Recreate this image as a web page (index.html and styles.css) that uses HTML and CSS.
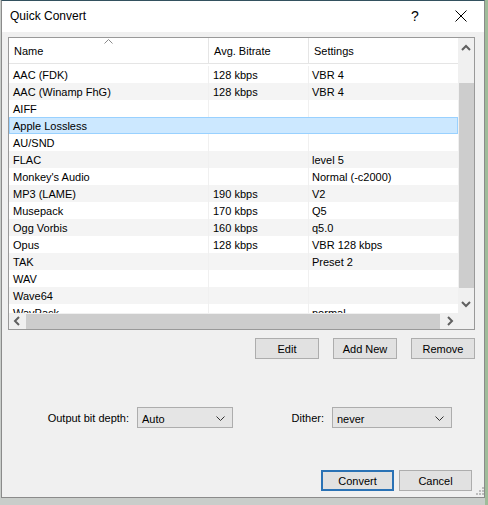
FILE: index.html
```html
<!DOCTYPE html>
<html>
<head>
<meta charset="utf-8">
<link rel="stylesheet" href="styles.css">
</head>
<body>
<div class="desktop">
  <div class="dialog">
    <div class="titlebar">
      <span class="title">Quick Convert</span>
      <span class="help">?</span>
      <svg class="close" width="12" height="12" viewBox="0 0 12 12"><path d="M0.5 0.5 L11.5 11.5 M11.5 0.5 L0.5 11.5" stroke="#000" stroke-width="1" fill="none"/></svg>
    </div>
    <div class="client">
      <div class="listview">
        <div class="lv-main">
          <div class="lv-header">
            <div class="hcell c1">Name</div>
            <div class="hcell c2">Avg. Bitrate</div>
            <div class="hcell c3">Settings</div>
            <svg class="sort-arrow" width="9" height="5" viewBox="0 0 9 5"><path d="M0.5 4.5 L4.5 0.5 L8.5 4.5" stroke="#8a8a8a" stroke-width="1" fill="none"/></svg>
          </div>
          <div class="lv-rows">
            <div class="row"><div class="cell c1">AAC (FDK)</div><div class="cell c2">128 kbps</div><div class="cell c3">VBR 4</div></div>
            <div class="row alt"><div class="cell c1">AAC (Winamp FhG)</div><div class="cell c2">128 kbps</div><div class="cell c3">VBR 4</div></div>
            <div class="row"><div class="cell c1">AIFF</div><div class="cell c2"></div><div class="cell c3"></div></div>
            <div class="row selected"><div class="cell c1">Apple Lossless</div><div class="cell c2"></div><div class="cell c3"></div></div>
            <div class="row"><div class="cell c1">AU/SND</div><div class="cell c2"></div><div class="cell c3"></div></div>
            <div class="row alt"><div class="cell c1">FLAC</div><div class="cell c2"></div><div class="cell c3">level 5</div></div>
            <div class="row"><div class="cell c1">Monkey's Audio</div><div class="cell c2"></div><div class="cell c3">Normal (-c2000)</div></div>
            <div class="row alt"><div class="cell c1">MP3 (LAME)</div><div class="cell c2">190 kbps</div><div class="cell c3">V2</div></div>
            <div class="row"><div class="cell c1">Musepack</div><div class="cell c2">170 kbps</div><div class="cell c3">Q5</div></div>
            <div class="row alt"><div class="cell c1">Ogg Vorbis</div><div class="cell c2">160 kbps</div><div class="cell c3">q5.0</div></div>
            <div class="row"><div class="cell c1">Opus</div><div class="cell c2">128 kbps</div><div class="cell c3">VBR 128 kbps</div></div>
            <div class="row alt"><div class="cell c1">TAK</div><div class="cell c2"></div><div class="cell c3">Preset 2</div></div>
            <div class="row"><div class="cell c1">WAV</div><div class="cell c2"></div><div class="cell c3"></div></div>
            <div class="row alt"><div class="cell c1">Wave64</div><div class="cell c2"></div><div class="cell c3"></div></div>
            <div class="row"><div class="cell c1">WavPack</div><div class="cell c2"></div><div class="cell c3">normal</div></div>
          </div>
        </div>
        <div class="vscroll">
          <svg class="arrow" width="16" height="17" viewBox="0 0 16 17"><path d="M4 12 L8 8 L12 12" stroke="#606060" stroke-width="2" fill="none"/></svg>
          <div class="vtrack"><div class="vthumb"></div></div>
          <svg class="arrow" width="16" height="17" viewBox="0 0 16 17"><path d="M4 6 L8 10 L12 6" stroke="#606060" stroke-width="2" fill="none"/></svg>
        </div>
        <div class="hscroll">
          <svg class="arrow" width="17" height="16" viewBox="0 0 17 16"><path d="M10 4 L6 8 L10 12" stroke="#606060" stroke-width="2" fill="none"/></svg>
          <div class="htrack"><div class="hthumb"></div></div>
          <svg class="arrow" width="17" height="16" viewBox="0 0 17 16"><path d="M7 4 L11 8 L7 12" stroke="#606060" stroke-width="2" fill="none"/></svg>
        </div>
        <div class="corner"></div>
      </div>

      <div class="actions">
        <button class="btn">Edit</button>
        <button class="btn">Add New</button>
        <button class="btn">Remove</button>
      </div>

      <div class="options">
        <span class="opt-label">Output bit depth:</span>
        <div class="combo"><span>Auto</span><svg width="9" height="5" viewBox="0 0 9 5"><path d="M0.5 0.5 L4.5 4.5 L8.5 0.5" stroke="#333" stroke-width="1" fill="none"/></svg></div>
        <span class="opt-label">Dither:</span>
        <div class="combo"><span>never</span><svg width="9" height="5" viewBox="0 0 9 5"><path d="M0.5 0.5 L4.5 4.5 L8.5 0.5" stroke="#333" stroke-width="1" fill="none"/></svg></div>
      </div>

      <div class="footer">
        <button class="btn default">Convert</button>
        <button class="btn">Cancel</button>
      </div>
    </div>
    <svg class="grip" width="9" height="9" viewBox="0 0 9 9">
      <rect x="7" y="1" width="2" height="2" fill="#bdbdbd"/>
      <rect x="4" y="4" width="2" height="2" fill="#bdbdbd"/>
      <rect x="7" y="4" width="2" height="2" fill="#bdbdbd"/>
      <rect x="1" y="7" width="2" height="2" fill="#bdbdbd"/>
      <rect x="4" y="7" width="2" height="2" fill="#bdbdbd"/>
      <rect x="7" y="7" width="2" height="2" fill="#bdbdbd"/>
    </svg>
  </div>
</div>
</body>
</html>
```

FILE: styles.css
```css
* { box-sizing: border-box; }

html, body {
  margin: 0;
  padding: 0;
}

body {
  width: 488px;
  height: 505px;
  overflow: hidden;
  background: #c9cdca;
  font-family: "Liberation Sans", Arial, sans-serif;
  font-size: 11px;
  color: #000;
}

.desktop {
  width: 488px;
  height: 505px;
  background: linear-gradient(to right, #c9cdca 0, #c9cdca 485px, #9fbc9a 485px);
  padding-left: 1px;
}

.dialog {
  position: relative;
  width: 484px;
  height: 498px;
  border: 1px solid #8b8b8b;
  border-top-color: #33515f;
  background: #f0f0f0;
  display: flex;
  flex-direction: column;
}

.titlebar {
  height: 31px;
  background: #fff;
  display: flex;
  align-items: center;
  padding-left: 8px;
  flex-shrink: 0;
}

.title {
  font-size: 12px;
  flex: 1;
  margin-top: -1px;
}

.help {
  font-size: 14px;
  width: 12px;
  margin-right: 32px;
  margin-top: -1px;
}

.close {
  margin-right: 17px;
  margin-top: -2px;
}

.client {
  flex: 1;
  padding: 5px 9px 0 6px;
}

/* list view */
.listview {
  width: 467px;
  height: 293px;
  border: 1px solid #999;
  background: #fff;
  display: grid;
  grid-template-columns: 449px 16px;
  grid-template-rows: 275px 16px;
}

.lv-main {
  overflow: hidden;
  position: relative;
}

.lv-header {
  position: relative;
  height: 26px;
  display: flex;
  border-bottom: 1px solid #e5e5e5;
}

.hcell {
  height: 100%;
  display: flex;
  align-items: center;
  padding-left: 5px;
  border-right: 1px solid #e5e5e5;
  padding-top: 1px;
}

.c1 { width: 200px; }
.c2 { width: 100px; }
.c3 { flex: 1; }
.hcell.c3 { border-right: none; }

.sort-arrow {
  position: absolute;
  left: 95px;
  top: 1px;
}

.lv-rows {
  padding-top: 2px;
}

.row {
  height: 17px;
  display: flex;
}

.row.alt { background: #f4f4f4; }

.row.selected {
  background: #cce8ff;
  box-shadow: inset 0 0 0 1px #99d1ff;
}

.cell {
  height: 100%;
  display: flex;
  align-items: center;
  padding-left: 4px;
  padding-top: 1px;
  border-right: 1px solid #f0f0f0;
  white-space: nowrap;
}

.cell.c3 { border-right: none; padding-left: 3px; }
.row.selected .cell { border-right-color: transparent; }

/* scrollbars */
.vscroll {
  background: #f0f0f0;
  display: flex;
  flex-direction: column;
}

.vscroll .arrow { display: block; flex-shrink: 0; }

.vtrack {
  flex: 1;
  padding-top: 28px;
  padding-bottom: 8px;
  display: flex;
  flex-direction: column;
  align-items: center;
}

.vthumb {
  width: 15px;
  height: 205px;
  background: #cdcdcd;
  margin-left: 1px;
}

.hscroll {
  background: #f0f0f0;
  display: flex;
  align-items: stretch;
}

.hscroll .arrow { display: block; flex-shrink: 0; }

.htrack {
  flex: 1;
  display: flex;
  align-items: center;
}

.hthumb {
  height: 15px;
  width: 414px;
  background: #cdcdcd;
}

.corner { background: #f0f0f0; }

/* buttons */
.btn {
  font-family: "Liberation Sans", Arial, sans-serif;
  font-size: 11px;
  color: #000;
  background: #e1e1e1;
  border: 1px solid #adadad;
  height: 21px;
  padding: 1px 0 0 0;
  margin: 0;
  display: flex;
  align-items: center;
  justify-content: center;
}

.actions {
  margin-top: 8px;
  display: flex;
  justify-content: flex-end;
  gap: 14px;
}

.actions .btn { width: 64px; }

.options {
  margin-top: 48px;
  display: grid;
  grid-template-columns: 135px 96px 99px 120px;
  align-items: center;
  margin-left: -6px;
}

.opt-label {
  text-align: right;
  padding-right: 8px;
}

.combo {
  height: 21px;
  background: #e5e5e5;
  border: 1px solid #adadad;
  display: flex;
  align-items: center;
  justify-content: space-between;
  padding: 2px 7px 0 4px;
}

.footer {
  margin-top: 42px;
  margin-right: 3px;
  display: flex;
  justify-content: flex-end;
  gap: 5px;
}

.footer .btn { width: 73px; }

.btn.default {
  border: 2px solid #2a72b5;
}

.grip {
  position: absolute;
  right: 0px;
  bottom: 2px;
}
```
